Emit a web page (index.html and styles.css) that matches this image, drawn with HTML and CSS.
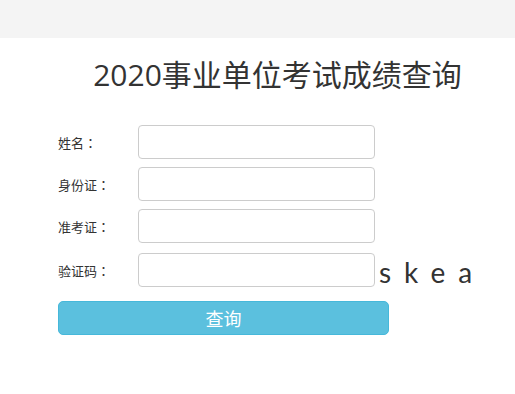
FILE: index.html
```html
<!DOCTYPE html>
<html lang="zh-CN">
<head>
<meta charset="utf-8">
<title>2020事业单位考试成绩查询</title>
<link rel="stylesheet" href="styles.css">
</head>
<body>
<div class="topbar"></div>
<h1 class="title">2020事业单位考试成绩查询</h1>
<form class="form">
  <div class="row">
    <label class="label">姓名<span class="colon" lang="zh-TW">：</span></label>
    <input class="input" type="text">
  </div>
  <div class="row">
    <label class="label">身份证<span class="colon" lang="zh-TW">：</span></label>
    <input class="input" type="text">
  </div>
  <div class="row">
    <label class="label">准考证<span class="colon" lang="zh-TW">：</span></label>
    <input class="input" type="text">
  </div>
  <div class="row row-captcha">
    <label class="label">验证码<span class="colon" lang="zh-TW">：</span></label>
    <input class="input" type="text">
    <span class="captcha">skea</span>
  </div>
  <button class="btn" type="button">查询</button>
</form>
</body>
</html>
```

FILE: styles.css
```css
html, body {
  margin: 0;
  padding: 0;
  background: #fff;
  font-family: "Open Sans", "Noto Sans CJK SC", sans-serif;
  color: #333;
}
.topbar {
  height: 38px;
  background: #f4f4f4;
}
.title {
  margin: 17px 0 0 0;
  padding-left: 40px;
  height: 40px;
  line-height: 40px;
  font-size: 30px;
  font-weight: normal;
  text-align: center;
  color: #333;
}
.form {
  margin: 30px 0 0 58px;
  width: 331px;
}
.row {
  display: flex;
  align-items: center;
  margin-bottom: 8px;
}
.label {
  flex: 0 0 80px;
  width: 80px;
  font-size: 13px;
  color: #333;
}
.colon {
  font-family: "Noto Sans CJK TC", sans-serif;
}
.input {
  flex: 0 0 237px;
  box-sizing: border-box;
  width: 237px;
  height: 34px;
  margin: 0;
  padding: 6px 12px;
  border: 1px solid #ccc;
  border-radius: 4px;
  background: #fff;
  font-size: 14px;
}
.row-captcha {
  height: 38px;
  margin-bottom: 12px;
  white-space: nowrap;
}
.captcha {
  flex: 0 0 auto;
  margin-left: 4px;
  font-family: "Lato", "Open Sans", sans-serif;
  font-size: 28px;
  line-height: 38px;
  letter-spacing: 13px;
  color: #333;
  padding-top: 4px;
}
.btn {
  display: block;
  box-sizing: border-box;
  width: 331px;
  height: 34px;
  margin: 0;
  padding: 0;
  border: 1px solid #46b8da;
  border-radius: 5px;
  background: #5bc0de;
  color: #fff;
  font-family: "Open Sans", "Noto Sans CJK SC", sans-serif;
  font-size: 18px;
}
```
